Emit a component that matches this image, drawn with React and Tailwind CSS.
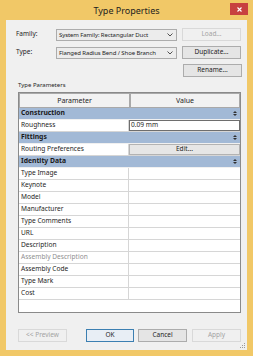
import React from "react";

const font = { fontFamily: '"Noto Sans", "Open Sans", sans-serif' };

function Chevron() {
  return (
    <svg width="6" height="4" viewBox="0 0 6 4" className="shrink-0">
      <path d="M0.5 0.5 L3 3 L5.5 0.5" fill="none" stroke="#404040" strokeWidth="0.9" />
    </svg>
  );
}

function Collapse() {
  return (
    <svg width="4" height="5" viewBox="0 0 4 5" className="shrink-0">
      <path d="M0 2 L2 0 L4 2 Z" fill="#303030" />
      <path d="M0 3 L2 5 L4 3 Z" fill="#303030" />
    </svg>
  );
}

function Combo({ text }) {
  return (
    <div className="w-[121px] h-[12px] border border-[#acacac] bg-[#ececec] flex items-center justify-between pl-[2px] pr-[3px] text-[6px] tracking-[-0.1px] text-[#1e1e1e] leading-none whitespace-nowrap overflow-hidden">
      <span>{text}</span>
      <Chevron />
    </div>
  );
}

function Btn({ text, disabled, w = "w-[59px]", focus }) {
  return (
    <div
      className={`${w} h-[13px] flex items-center justify-center text-[6.5px] leading-none whitespace-nowrap border ${
        disabled
          ? "border-[#d9d9d9] bg-[#f0f0f0] text-[#a3a3a3]"
          : focus
          ? "border-[#3c7fb1] bg-[#e8eef5] text-[#1e1e1e]"
          : "border-[#acacac] bg-[#e5e5e5] text-[#1e1e1e]"
      }`}
    >
      {text}
    </div>
  );
}

function Group({ text }) {
  return (
    <div className="h-[12px] bg-[#a2b9d6] border-b border-[#f0f0f0] flex items-center justify-between pl-[2px] pr-[3px]">
      <span className="text-[6.8px] font-bold text-[#1a1a1a] leading-none whitespace-nowrap">{text}</span>
      <Collapse />
    </div>
  );
}

function Row({ label, gray, value }) {
  return (
    <div className="h-[12px] flex border-b border-[#d6d6d6] bg-white">
      <div
        className={`w-[110px] shrink-0 border-r border-[#d6d6d6] flex items-center pl-[2px] text-[6.6px] leading-none whitespace-nowrap ${
          gray ? "text-[#8f8f8f]" : "text-[#1e1e1e]"
        }`}
      >
        {label}
      </div>
      <div className="flex-1 flex items-stretch">{value}</div>
    </div>
  );
}

export default function App() {
  const identity = [
    "Type Image",
    "Keynote",
    "Model",
    "Manufacturer",
    "Type Comments",
    "URL",
    "Description",
    "Assembly Description",
    "Assembly Code",
    "Type Mark",
    "Cost",
  ];
  return (
    <div className="w-[253px] h-[356px] bg-[#f1c867] flex flex-col" style={font}>
      <div className="h-[20px] relative flex items-center justify-center">
        <span className="text-[9px] text-[#1e1e1e] leading-none">Type Properties</span>
        <div className="absolute right-[5px] top-[3px] w-[18px] h-[12px] bg-[#c7413f] flex items-center justify-center">
          <svg width="5" height="5" viewBox="0 0 5 5">
            <path d="M0.5 0.5 L4.5 4.5 M4.5 0.5 L0.5 4.5" stroke="white" strokeWidth="1.1" />
          </svg>
        </div>
      </div>
      <div className="mx-[6px] mb-[6px] flex-1 bg-[#f0f0f0] flex flex-col relative">
        <div className="pl-[10px] pr-[5px] pt-[8px] flex flex-col gap-[5px]">
          <div className="flex items-center">
            <span className="w-[40px] text-[6.5px] text-[#1e1e1e] leading-none">Family:</span>
            <Combo text="System Family: Rectangular Duct" />
            <div className="ml-[5px]">
              <Btn text="Load..." disabled />
            </div>
          </div>
          <div className="flex items-center">
            <span className="w-[40px] text-[6.5px] text-[#1e1e1e] leading-none">Type:</span>
            <Combo text="Flanged Radius Bend / Shoe Branch" />
            <div className="ml-[5px]">
              <Btn text="Duplicate..." />
            </div>
          </div>
          <div className="flex justify-end">
            <Btn text="Rename..." />
          </div>
        </div>
        <div className="pl-[12px] mt-[5px] text-[6px] text-[#1e1e1e] leading-none">Type Parameters</div>
        <div className="ml-[12px] mr-[6px] mt-[4px] h-[221px] border border-[#8a8a8a] bg-white flex flex-col">
          <div className="h-[15px] flex bg-white">
            <div className="w-[111px] border border-[#a9a9a9] bg-[#f2f2f2] flex items-center justify-center text-[7px] text-[#1e1e1e] leading-none">
              Parameter
            </div>
            <div className="flex-1 border border-[#a9a9a9] bg-[#f2f2f2] flex items-center justify-center text-[7px] text-[#1e1e1e] leading-none">
              Value
            </div>
          </div>
          <Group text="Construction" />
          <Row
            label="Roughness"
            value={
              <div className="flex-1 border border-[#6e6e6e] bg-white flex items-center pl-[1px] text-[6.6px] text-[#1e1e1e] leading-none">
                0.09 mm
              </div>
            }
          />
          <Group text="Fittings" />
          <Row
            label="Routing Preferences"
            value={
              <div className="flex-1 border border-[#b3b3b3] bg-[#e6e6e6] flex items-center justify-center text-[6.6px] text-[#1e1e1e] leading-none">
                Edit...
              </div>
            }
          />
          <Group text="Identity Data" />
          {identity.map((l) => (
            <Row key={l} label={l} gray={l === "Assembly Description"} />
          ))}
        </div>
        <div className="flex items-center pl-[12px] mt-[16px]">
          <Btn text="<< Preview" disabled w="w-[49px]" />
          <div className="ml-[19px]">
            <Btn text="OK" focus w="w-[48px]" />
          </div>
          <div className="ml-[4px]">
            <Btn text="Cancel" w="w-[49px]" />
          </div>
          <div className="ml-[5px]">
            <Btn text="Apply" disabled w="w-[49px]" />
          </div>
        </div>
        <svg className="absolute right-[1px] bottom-[1px]" width="6" height="6" viewBox="0 0 6 6">
          <rect x="4" y="0" width="1" height="1" fill="#9a9a9a" />
          <rect x="2" y="2" width="1" height="1" fill="#9a9a9a" />
          <rect x="4" y="2" width="1" height="1" fill="#9a9a9a" />
          <rect x="0" y="4" width="1" height="1" fill="#9a9a9a" />
          <rect x="2" y="4" width="1" height="1" fill="#9a9a9a" />
          <rect x="4" y="4" width="1" height="1" fill="#9a9a9a" />
        </svg>
      </div>
    </div>
  );
}
